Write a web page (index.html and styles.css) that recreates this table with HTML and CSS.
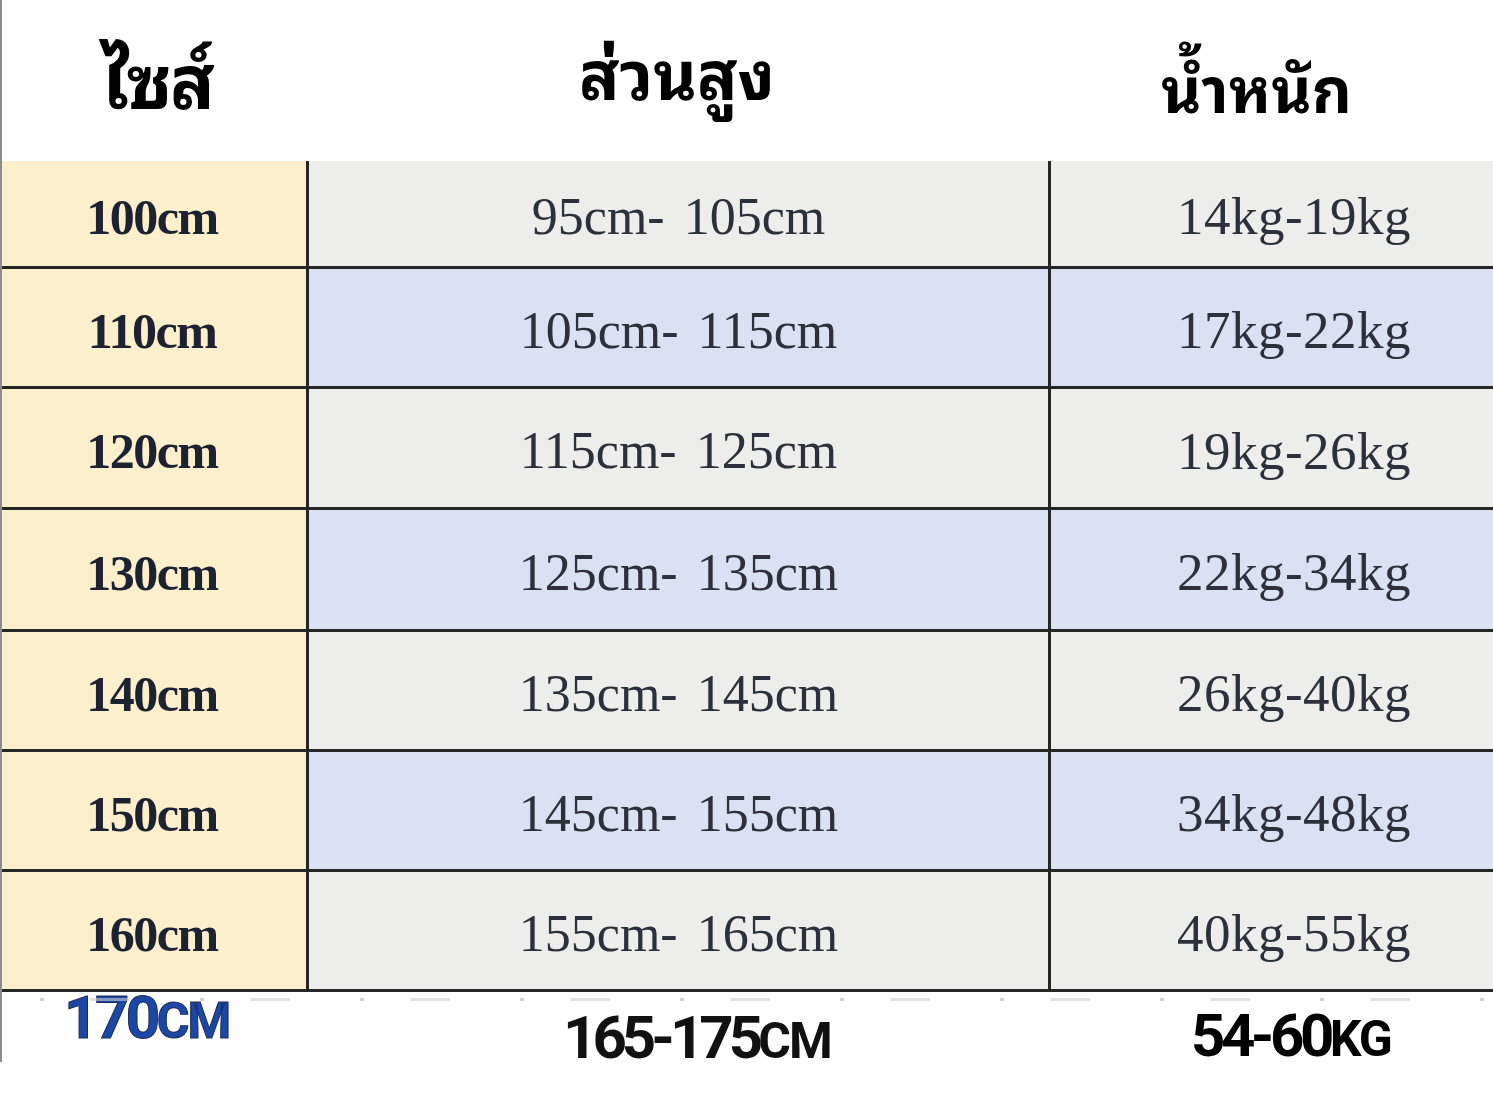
FILE: index.html
```html
<!DOCTYPE html>
<html lang="th">
<head>
<meta charset="utf-8">
<title>ตารางไซส์</title>
<link rel="stylesheet" href="styles.css">
</head>
<body>
<div class="page">
  <div class="head">
    <div class="h h1">ไซส์</div>
    <div class="h h2">ส่วนสูง</div>
    <div class="h h3">น้ำหนัก</div>
  </div>
  <div class="table">
    <div class="row r1 gray"><div class="c size">100cm</div><div class="c h-rng">95cm- 105cm</div><div class="c w-rng">14kg-19kg</div></div>
    <div class="row blue"><div class="c size">110cm</div><div class="c h-rng">105cm- 115cm</div><div class="c w-rng">17kg-22kg</div></div>
    <div class="row r3 gray"><div class="c size">120cm</div><div class="c h-rng">115cm- 125cm</div><div class="c w-rng">19kg-26kg</div></div>
    <div class="row r4 blue"><div class="c size">130cm</div><div class="c h-rng">125cm- 135cm</div><div class="c w-rng">22kg-34kg</div></div>
    <div class="row gray"><div class="c size">140cm</div><div class="c h-rng">135cm- 145cm</div><div class="c w-rng">26kg-40kg</div></div>
    <div class="row blue"><div class="c size">150cm</div><div class="c h-rng">145cm- 155cm</div><div class="c w-rng">34kg-48kg</div></div>
    <div class="row gray"><div class="c size">160cm</div><div class="c h-rng">155cm- 165cm</div><div class="c w-rng">40kg-55kg</div></div>
  </div>
  <div class="dots"></div>
  <div class="extra">
    <div class="e e1">170<span class="u">CM</span></div>
    <div class="e e2">165-175<span class="u">CM</span></div>
    <div class="e e3">54-60<span class="u">KG</span></div>
  </div>
</div>
</body>
</html>
```
FILE: styles.css
```css
html, body {
  margin: 0;
  padding: 0;
  background: #ffffff;
}
body {
  width: 1493px;
  height: 1097px;
  overflow: hidden;
}
.page {
  position: relative;
  width: 1493px;
  height: 1097px;
}
.page::before {
  content: "";
  position: absolute;
  left: 0;
  top: 0;
  width: 2px;
  height: 1062px;
  background: #8c8c8c;
  z-index: 2;
}
.head {
  height: 161px;
  display: grid;
  grid-template-columns: 309px 742px 1fr;
  font-family: "Noto Sans Thai Looped", "Noto Serif Thai", "Loma", "Garuda", "Sarabun", "Noto Sans Thai", "Noto Sans", sans-serif;
  font-weight: 700;
  color: #000;
}
.h {
  display: flex;
  align-items: flex-end;
  line-height: 1;
  white-space: nowrap;
}
.h1 { font-size: 74px; padding-bottom: 48px; padding-left: 102px; letter-spacing: -2px; }
.h2 { font-size: 67px; padding-bottom: 58px; padding-left: 270px; }
.h3 { font-size: 62px; padding-bottom: 45px; padding-left: 110px; }

.table {
  display: flex;
  flex-direction: column;
}
.row {
  display: grid;
  grid-template-columns: 309px 742px 1fr;
  height: 120px;
  box-sizing: border-box;
  border-bottom: 3px solid #262626;
  font-family: "Liberation Serif", "Times New Roman", serif;
  color: #2c303a;
}
.r1 { height: 108px; }
.r3 { height: 121px; }
.r4 { height: 122px; }
.gray { background: #ededeb; }
.blue { background: #d9e1f2; }
.c {
  display: flex;
  align-items: center;
  justify-content: center;
  font-size: 52px;
  line-height: 1;
  padding-top: 6px;
  white-space: pre;
}
.size {
  background: #fcf0cc;
  border-right: 3px solid #262626;
  font-weight: 700;
  color: #1c2231;
  font-size: 50px;
  letter-spacing: -1.5px;
  padding-right: 2px;
}
.h-rng {
  border-right: 3px solid #262626;
  letter-spacing: 0px;
  word-spacing: 6px;
}
.w-rng {
  padding-left: 44px;
  font-size: 53px;
  letter-spacing: 0.5px;
}
.dots {
  margin-top: 6px;
  background: repeating-linear-gradient(90deg, transparent 0 40px, #b8b8b8 40px 44px, transparent 44px 90px, #d0d0d0 90px 130px, transparent 130px 160px);
  opacity: 0.6;
  height: 3px;
}
.extra {
  display: grid;
  grid-template-columns: 309px 742px 1fr;
  font-family: "Roboto", "Liberation Sans", sans-serif;
  font-weight: 700;
  line-height: 1;
}
.e {
  font-size: 60px;
  letter-spacing: -3.5px;
  white-space: nowrap;
}
.e .u { font-size: 50px; letter-spacing: -2px; }
.e1 {
  color: #1b47a6;
  padding-left: 64px;
  -webkit-text-stroke: 1px #1d2a55;
  margin-top: -13px;
}
.e2 {
  color: #111;
  padding-left: 254px;
  margin-top: 7px;
  letter-spacing: -5px;
}
.e3 {
  color: #000;
  padding-left: 140px;
  margin-top: 5px;
  letter-spacing: -4.5px;
}
```
